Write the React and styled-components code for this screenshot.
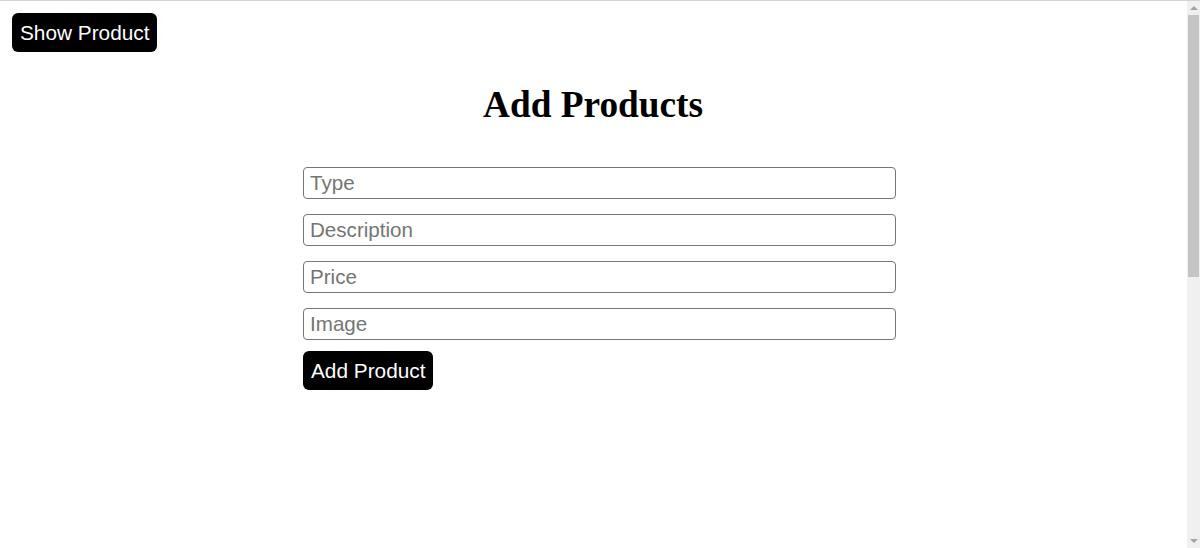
import React from 'react';
import styled, { createGlobalStyle } from 'styled-components';

const GlobalStyle = createGlobalStyle`
  html {
    background: #fff;
  }
  body {
    margin: 0;
    border-top: 1px solid #d4d4d4;
    font-family: "Liberation Sans", Arial, sans-serif;
    overflow: hidden;
  }
`;

const Page = styled.div`
  box-sizing: border-box;
  width: calc(100% - 14px);
  padding: 12px 12px 40px 12px;
`;

const TopBar = styled.div`
  display: flex;
`;

const Button = styled.button`
  background: #000;
  color: #fff;
  border: none;
  border-radius: 6px;
  padding: 8px 8px 7px 8px;
  font-family: "Liberation Sans", Arial, sans-serif;
  font-size: 20.8px;
  line-height: 24px;
  cursor: pointer;
`;

const Title = styled.h1`
  margin: 32px 0 41px 0;
  text-align: center;
  font-family: "Liberation Serif", "Times New Roman", serif;
  font-weight: bold;
  font-size: 37.3px;
  line-height: 42px;
  color: #000;
`;

const Form = styled.form`
  width: 593px;
  margin-left: calc(50% - 290px);
  display: flex;
  flex-direction: column;
  align-items: flex-start;
  gap: 15px;
`;

const Input = styled.input`
  box-sizing: border-box;
  width: 100%;
  height: 32px;
  padding: 0 6px;
  border: 1px solid #767676;
  border-radius: 4px;
  font-family: "Liberation Sans", Arial, sans-serif;
  font-size: 20.6px;
  color: #000;
  background: #fff;
  &::placeholder {
    color: #757575;
  }
`;

const SubmitButton = styled(Button)`
  margin-top: -4px;
`;

// imitation of the window scrollbar seen in the screenshot
const ScrollTrack = styled.div`
  position: fixed;
  top: 1px;
  right: 0;
  bottom: 0;
  width: 13px;
  background: #f0f0f0;
  display: flex;
  flex-direction: column;
  align-items: center;
`;

const Arrow = styled.div`
  width: 0;
  height: 0;
  margin: 5px 0;
  border-left: 4px solid transparent;
  border-right: 4px solid transparent;
  ${({ down }) => (down ? 'border-top: 4px solid #a3a3a3;' : 'border-bottom: 4px solid #a3a3a3;')}
  ${({ down }) => (down ? 'margin-top: auto;' : '')}
`;

const Thumb = styled.div`
  width: 11px;
  height: 262px;
  background: #c4c4c4;
`;

const fields = ['Type', 'Description', 'Price', 'Image'];

const App = () => {
  return (
    <>
      <GlobalStyle />
      <Page>
        <TopBar>
          <Button>Show Product</Button>
        </TopBar>
        <Title>Add Products</Title>
        <Form onSubmit={(e) => e.preventDefault()}>
          {fields.map((f) => (
            <Input key={f} placeholder={f} />
          ))}
          <SubmitButton type="submit">Add Product</SubmitButton>
        </Form>
      </Page>
      <ScrollTrack>
        <Arrow />
        <Thumb />
        <Arrow down />
      </ScrollTrack>
    </>
  );
};

export default App;
